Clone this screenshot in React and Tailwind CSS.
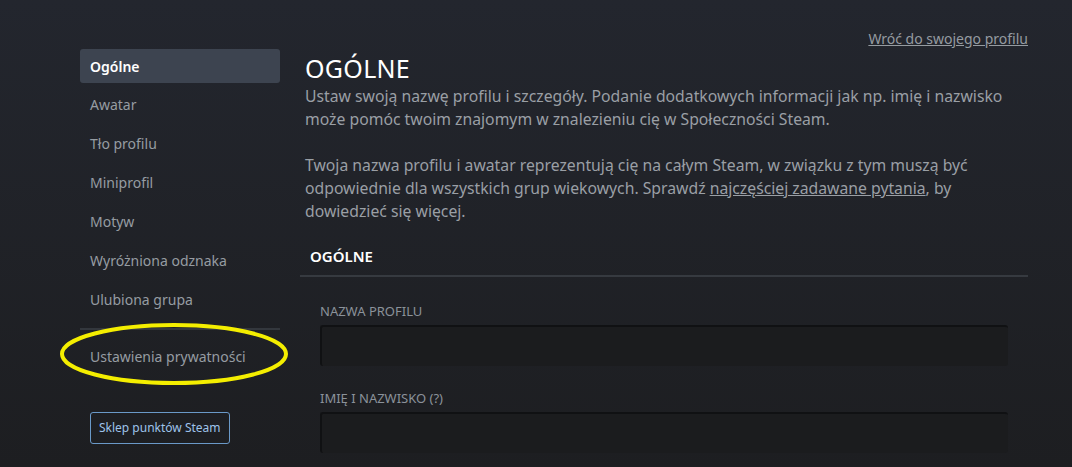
import React from 'react';

const navItems = [
  'Ogólne',
  'Awatar',
  'Tło profilu',
  'Miniprofil',
  'Motyw',
  'Wyróżniona odznaka',
  'Ulubiona grupa',
];

const font = { fontFamily: '"Noto Sans", "Open Sans", Arial, sans-serif' };

const Field = ({ label }) => (
  <div className="flex flex-col">
    <label className="text-[13px] uppercase text-[#8b929a] leading-4 mb-[6px]">{label}</label>
    <div className="h-[41px] rounded-[3px] bg-[#1b1c1e] border-t-2 border-l-2 border-[#101113]" />
  </div>
);

export default function App() {
  return (
    <div
      className="relative w-[1072px] h-[467px] overflow-hidden bg-gradient-to-b from-[#23262e] to-[#1d1e21]"
      style={font}
    >
      <div className="flex pl-[80px] pt-[49px]">
        {/* sidebar */}
        <aside className="w-[200px] shrink-0 flex flex-col">
          {navItems.map((item, i) => (
            <div
              key={item}
              className={
                i === 0
                  ? 'h-[34px] mb-[5px] flex items-center px-[10px] rounded-[3px] bg-[#3d4450] text-white text-[14px] font-semibold'
                  : 'h-[34px] mb-[5px] flex items-center px-[10px] text-[#969ca2] text-[14px] pb-[1px]'
              }
            >
              {item}
            </div>
          ))}
          <div className="h-[2px] bg-[#33373d] mt-[6px]" />
          <div className="h-[34px] mt-[9px] flex items-center px-[10px] text-[#969ca2] text-[14px]">
            Ustawienia prywatności
          </div>
          <div className="mt-[39px] pl-[10px]">
            <button className="h-[32px] px-[8px] rounded-[3px] border border-[#6a99c8] text-[#9ec3ea] text-[12px] bg-transparent">
              Sklep punktów Steam
            </button>
          </div>
        </aside>

        {/* main */}
        <main className="w-[728px] ml-[20px] relative">
          <a className="absolute right-0 top-[-21px] text-[14px] text-[#959ba1] underline">
            Wróć do swojego profilu
          </a>
          <div className="pl-[5px] pr-[15px]">
            <h1 className="text-[25px] leading-[30px] text-white tracking-[0.3px] mt-[4px]">OGÓLNE</h1>
            <p className="text-[15.75px] leading-[23px] text-[#9a9fa5] mt-[2px]">
              Ustaw swoją nazwę profilu i szczegóły. Podanie dodatkowych informacji jak np. imię i nazwisko
              może pomóc twoim znajomym w znalezieniu cię w Społeczności Steam.
              <br />
              <br />
              Twoja nazwa profilu i awatar reprezentują cię na całym Steam, w związku z tym muszą być
              odpowiednie dla wszystkich grup wiekowych. Sprawdź{' '}
              <span className="underline">najczęściej zadawane pytania</span>, by dowiedzieć się więcej.
            </p>
          </div>
          <div className="mt-[18px] mb-[4px] h-[30px] flex items-center pl-[10px] text-[15px] font-semibold text-white">
            OGÓLNE
          </div>
          <div className="h-[2px] bg-[#363a40]" />
          <div className="pl-[20px] pr-[20px] pt-[26px] flex flex-col gap-[24px]">
            <Field label="Nazwa profilu" />
            <Field label="Imię i nazwisko (?)" />
          </div>
        </main>
      </div>

      {/* annotation */}
      <svg className="absolute left-[58px] top-[321px]" width="232" height="66" viewBox="0 0 232 66">
        <ellipse cx="116" cy="33" rx="112" ry="29" fill="none" stroke="#f4ee00" strokeWidth="4" />
      </svg>
    </div>
  );
}
